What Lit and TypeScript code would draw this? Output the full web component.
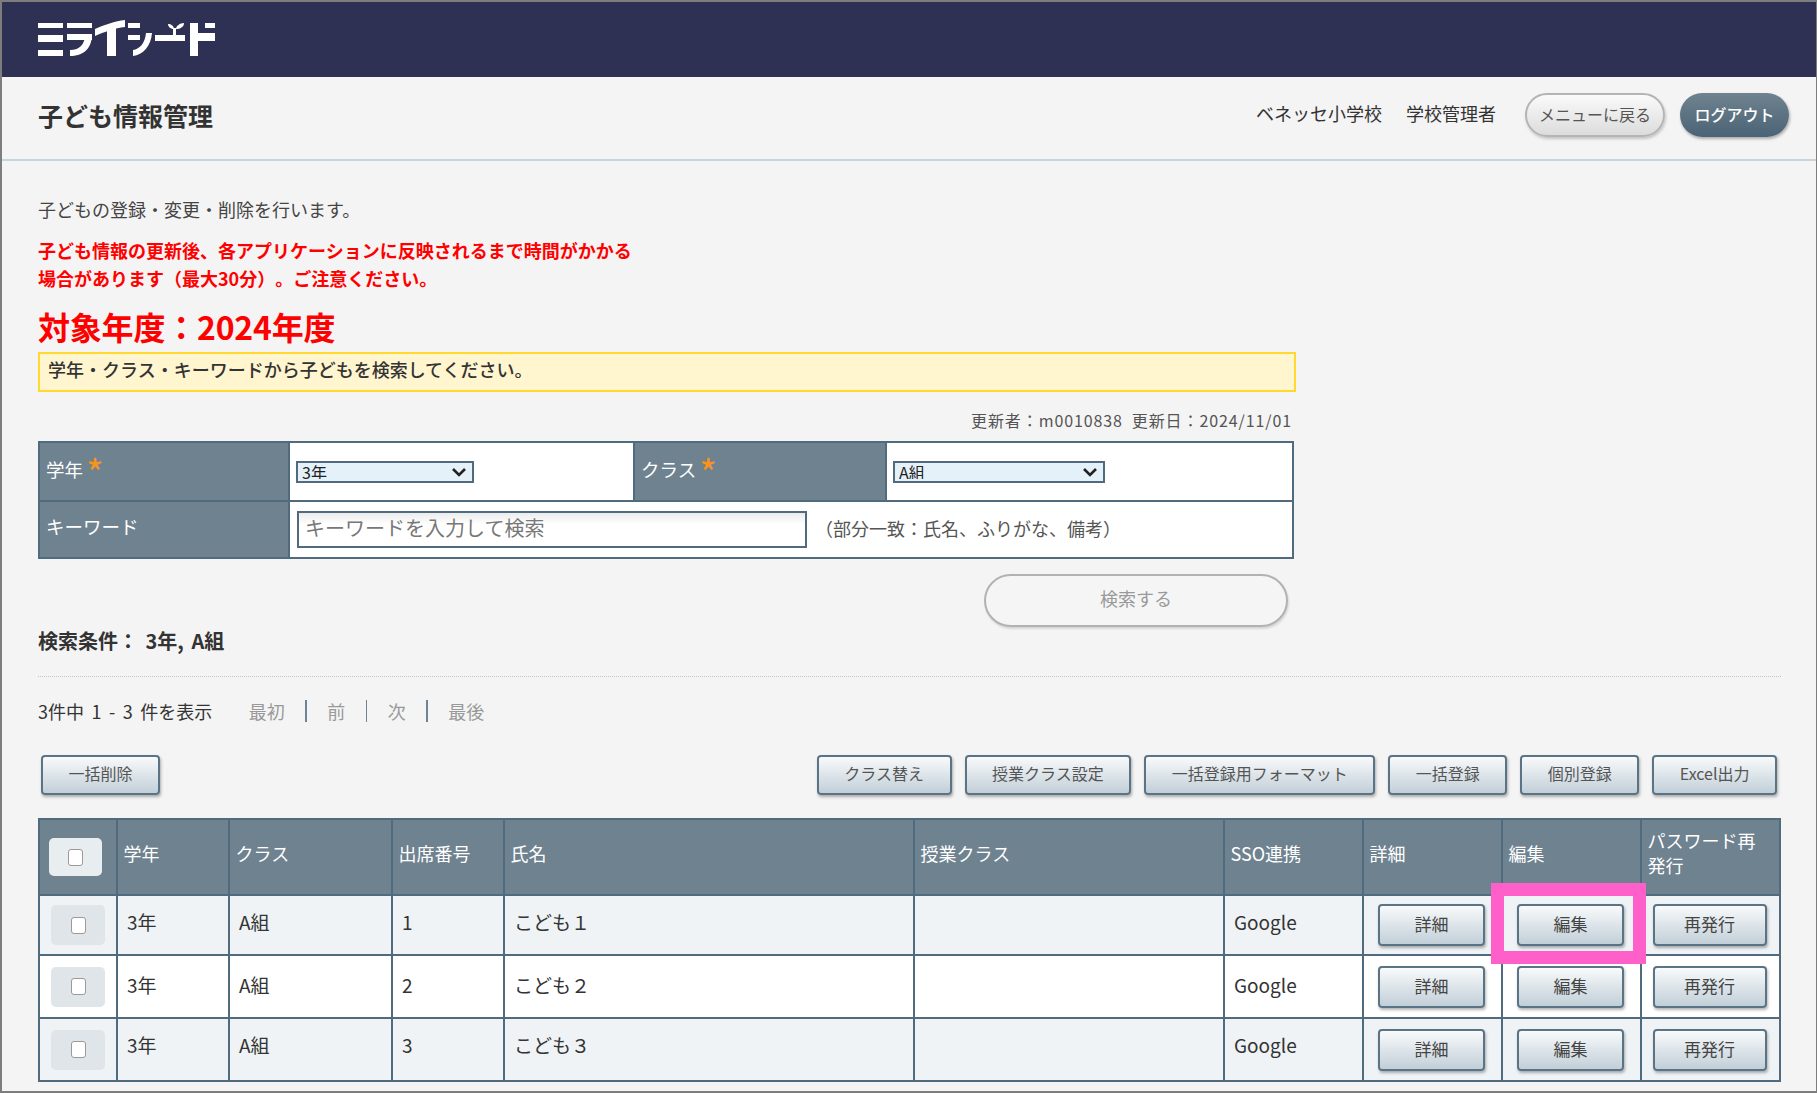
import { LitElement, html, css } from "lit";
import { customElement } from "lit/decorators.js";

const FONT = css`"Noto Sans CJK JP", "Noto Sans", sans-serif`;

@customElement("app-root")
export class AppRoot extends LitElement {
  static styles = css`
    :host {
      display: block;
      width: 1817px;
      height: 1093px;
      overflow: hidden;
      font-family: ${FONT};
      text-spacing-trim: space-all;
      color: #333;
      background: #f4f4f4;
    }
    * { box-sizing: border-box; }
    .frame {
      height: 1093px;
      border: 2px solid #7d7d7d;
      border-right-width: 1px;
      background: #f4f4f4;
    }
    .topbar {
      height: 75px;
      background: #2e3054;
      display: flex;
      align-items: center;
      padding-left: 36px;
    }
    .logo { display: block; margin-top: 1px; }
    .subbar {
      height: 84px;
      border-bottom: 2px solid #c6d4dd;
      display: flex;
      align-items: center;
      padding: 0 27px 6px 36px;
    }
    .subbar h1 {
      margin: 0;
      font-size: 25px;
      line-height: 32px;
      font-weight: 700;
      color: #333;
      flex: 1;
    }
    .who { font-size: 18px; line-height: 24px; margin: 0 24px 4px 0; }
    .who.last { margin-right: 29px; }
    .pill {
      height: 44px;
      border-radius: 22px;
      font-family: inherit;
      font-size: 16px;
      padding: 0 0 2px;
      cursor: pointer;
    }
    .pill.menu {
      width: 140px;
      margin-right: 15px;
      color: #555;
      border: 2px solid #b4b4b4;
      background: linear-gradient(#fafafa, #dcdcdc);
      box-shadow: 1px 2px 3px rgba(0, 0, 0, 0.2);
    }
    .pill.logout {
      width: 109px;
      color: #fff;
      font-weight: 500;
      border: 0;
      background: linear-gradient(#70838f, #4a6376);
      box-shadow: 1px 2px 3px rgba(0, 0, 0, 0.3);
    }
    main { padding: 34px 35px 0 36px; }
    .intro { margin: 0; font-size: 18px; line-height: 28px; color: #444; }
    .warn {
      margin: 13px 0 0;
      font-size: 18px;
      line-height: 28px;
      font-weight: 700;
      color: #f00;
    }
    .year {
      margin: 11.5px 0 0;
      font-size: 32px;
      letter-spacing: -0.2px;
      line-height: 44px;
      font-weight: 700;
      color: #f00;
    }
    .notice {
      width: 1258px;
      height: 40px;
      margin-top: 4.5px;
      border: 2px solid #ffd92e;
      background: #fff5cf;
      padding-left: 8px;
      font-size: 18px;
      line-height: 31px;
      font-weight: 500;
      color: #333;
    }
    .updated {
      width: 1254px;
      margin-top: 18px;
      text-align: right;
      font-size: 16px;
      letter-spacing: 0.9px;
      line-height: 20px;
      color: #555;
      white-space: pre;
    }
    table { border-collapse: collapse; table-layout: fixed; }
    .search { margin-top: 11px; width: 1254px; }
    .search td, .search th { border: 2px solid #4f6b7d; padding: 0; }
    .search th {
      background: #6f8290;
      color: #fff;
      font-size: 18.5px;
      font-weight: 400;
      text-align: left;
      padding: 0 0 6px 6px;
    }
    .search .r2 th { padding-bottom: 8px; }
    .search td { background: #fff; }
    .r1 { height: 59px; }
    .r2 { height: 57px; }
    .c1 { width: 250px; }
    .c2 { width: 345px; }
    .c3 { width: 252px; }
    .c4 { width: 407px; }
    .req {
      color: #f7931e;
      font-size: 38px;
      line-height: 10px;
      margin-left: 3px;
      vertical-align: -11px;
    }
    .sel { position: relative; margin-left: 6px; width: 178px; height: 22px; }
    .sel.wide { width: 212px; }
    select {
      appearance: none;
      display: block;
      width: 100%;
      height: 100%;
      padding: 0 0 2px 4px;
      border: 2px solid #4f6b7d;
      border-radius: 0;
      background-color: #e5f1f9;
      font-family: inherit;
      font-size: 16px;
      line-height: 18px;
      color: #222;
    }
    .chev { position: absolute; right: 7px; top: 6px; pointer-events: none; }
    .kw { display: flex; align-items: center; padding: 0 0 1px 7px; }
    .kw input {
      width: 510px;
      height: 37px;
      border: 2px solid #4f6b7d;
      padding: 0 6px 4px;
      background: linear-gradient(#ececec, #fff 35%);
      font-family: inherit;
      font-size: 20px;
      color: #333;
      outline: none;
    }
    .kw input::placeholder { color: #777; opacity: 1; }
    .hint { margin: 0 0 3px 8px; font-size: 18px; color: #555; }
    .go {
      width: 1250px;
      margin-top: 15px;
      display: flex;
      justify-content: flex-end;
    }
    .go button {
      width: 304px;
      height: 53px;
      border-radius: 27px;
      border: 2px solid #b2b2b2;
      background: #f5f5f5;
      box-shadow: 1px 2px 2px rgba(0, 0, 0, 0.12);
      color: #999;
      font-family: inherit;
      font-size: 18px;
      padding: 0 0 6px;
    }
    .cond { margin-top: 2px; font-size: 20px; line-height: 24px; font-weight: 700; color: #333; word-spacing: 3px; }
    .rule { margin-top: 23px; border-top: 1.5px dotted #c3c3c3; }
    .pager {
      margin-top: 22px;
      display: flex;
      align-items: center;
      gap: 20.5px;
      font-size: 18px;
      line-height: 24px;
      color: #999;
    }
    .pager .count { color: #333; margin-right: 16px; word-spacing: 3.5px; }
    .pager .sep { width: 1.5px; height: 22px; background: #6c8496; }
    .actions { margin-top: 32px; padding: 0 4px 0 3px; display: flex; gap: 13px; }
    .actions .grow { flex: 1; }
    .btn {
      height: 40px;
      padding: 0 25.5px 4px;
      border: 2px solid #5a7385;
      border-radius: 4px;
      background: linear-gradient(#f8fafb, #c2cfd8);
      box-shadow: 1px 2px 3px rgba(0, 0, 0, 0.3);
      color: #555;
      font-family: inherit;
      font-size: 16px;
      white-space: nowrap;
    }
    .list { margin-top: 23px; width: 1741px; }
    .list th, .list td { border: 2px solid #4f6b7d; }
    .list th {
      background: #6f8290;
      color: #fff;
      font-size: 18px;
      line-height: 25px;
      font-weight: 400;
      text-align: left;
      padding: 0 12px 8px 5.5px;
      height: 76px;
    }
    .list td {
      font-size: 19px;
      line-height: 26px;
      color: #333;
      padding: 0 4px 6px 9px;
    }
    .list tr.odd td { background: #eff3f6; height: 60px; }
    .list tr.even td { background: #fff; height: 63px; padding-bottom: 3px; }
    .list tr.last td { height: 63px; padding-bottom: 9px; }
    .w1 { width: 78px; }
    .w2 { width: 112px; }
    .w3 { width: 163px; }
    .w4 { width: 112px; }
    .w5 { width: 410px; }
    .w6 { width: 310px; }
    .w7 { width: 139px; }
    .list tr td.cell-check, .list tr th.cell-check { padding: 0; }
    .list tr td.cell-btn { padding: 0 2px 0 0; }
    .chk {
      display: flex;
      align-items: center;
      justify-content: center;
      border-radius: 5px;
    }
    .chk.head { width: 53px; height: 38px; background: #e8edf0; margin-left: 9px; }
    .chk.body { width: 54px; height: 40px; background: #dfe5e8; margin-left: 11px; }
    .chk input {
      appearance: none;
      display: block;
      width: 15px;
      height: 17px;
      margin: 0;
      background: #fff;
      border: 1.5px solid #9a9a9a;
      border-radius: 3px;
    }
    .holder { position: relative; width: 107px; margin: 0 auto; }
    .holder.wide { width: 114px; }
    .rbtn {
      display: block;
      width: 100%;
      height: 42px;
      padding: 0 0 3px;
      border: 2px solid #5a7385;
      border-radius: 4px;
      background: linear-gradient(#f8fafb, #c2cfd8);
      box-shadow: 1px 2px 3px rgba(0, 0, 0, 0.3);
      color: #444;
      font-family: inherit;
      font-size: 17px;
    }
    .mark {
      position: absolute;
      top: -21px;
      right: -22px;
      bottom: -18px;
      left: -26px;
      border: 13px solid #ff5fc8;
      pointer-events: none;
    }
  `;

  private logo() {
    return html`<svg class="logo" width="180" height="40" viewBox="38 20 180 40" role="img" aria-label="ミライシード" fill="#fff" stroke="none">
      <rect x="38" y="23" width="25" height="5"/>
      <rect x="38" y="35" width="25" height="7"/>
      <rect x="38" y="50" width="25" height="6"/>
      <rect x="67" y="23" width="25" height="5"/>
      <rect x="67" y="34" width="25" height="6"/>
      <path d="M85 34 H92 C92 46 86 56 70 56 V50 C80 50 85 44 85 34 Z"/>
      <path d="M125 20 V27 C115 28 104 32 95 36 V29 C104 25 115 21 125 20 Z"/>
      <rect x="107" y="28" width="9" height="28"/>
      <rect x="128" y="23" width="12" height="5"/>
      <rect x="128" y="35" width="12" height="5"/>
      <path d="M152 33 H152 C151 46 143 55 133 56 V50 C140 49 145 43 146 33 Z"/>
      <rect x="155" y="35" width="30" height="6"/>
      <rect x="173" y="28" width="3" height="8"/>
      <path d="M168 24 C171 24 174 26 174 29 C171 29 168 27 168 24 Z M184 23 C184 27 180 29 176 29 C176 26 180 23 184 23 Z"/>
      <rect x="190" y="23" width="8" height="33"/>
      <rect x="198" y="33" width="17" height="8"/>
      <rect x="205" y="23" width="10" height="5"/>
    </svg>`;
  }

  private chevron() {
    return html`<svg class="chev" width="16" height="10" viewBox="0 0 16 10"><path d="M2 2 L8 8 L14 2" fill="none" stroke="#222" stroke-width="2.6"/></svg>`;
  }

  private check(kind: string) {
    return html`<div class="chk ${kind}"><input type="checkbox" /></div>`;
  }

  private row(cls: string, n: number, label: string, marked: boolean) {
    return html`<tr class=${cls}>
      <td class="cell-check">${this.check("body")}</td>
      <td>3年</td>
      <td>A組</td>
      <td>${n}</td>
      <td>こども${label}</td>
      <td></td>
      <td>Google</td>
      <td class="cell-btn"><div class="holder"><button class="rbtn">詳細</button></div></td>
      <td class="cell-btn"><div class="holder"><button class="rbtn">編集</button>${marked ? html`<div class="mark"></div>` : ""}</div></td>
      <td class="cell-btn"><div class="holder wide"><button class="rbtn">再発行</button></div></td>
    </tr>`;
  }

  render() {
    return html`<div class="frame">
      <div class="topbar">${this.logo()}</div>
      <div class="subbar">
        <h1>子ども情報管理</h1>
        <span class="who">ベネッセ小学校</span>
        <span class="who last">学校管理者</span>
        <button class="pill menu">メニューに戻る</button>
        <button class="pill logout">ログアウト</button>
      </div>
      <main>
        <p class="intro">子どもの登録・変更・削除を行います。</p>
        <p class="warn">子ども情報の更新後、各アプリケーションに反映されるまで時間がかかる<br />場合があります（最大30分）。ご注意ください。</p>
        <p class="year">対象年度：2024年度</p>
        <div class="notice">学年・クラス・キーワードから子どもを検索してください。</div>
        <div class="updated">更新者：m0010838  更新日：2024/11/01</div>
        <table class="search">
          <colgroup><col class="c1" /><col class="c2" /><col class="c3" /><col class="c4" /></colgroup>
          <tr class="r1">
            <th>学年<span class="req">*</span></th>
            <td><div class="sel"><select><option>3年</option></select>${this.chevron()}</div></td>
            <th>クラス<span class="req">*</span></th>
            <td><div class="sel wide"><select><option>A組</option></select>${this.chevron()}</div></td>
          </tr>
          <tr class="r2">
            <th>キーワード</th>
            <td colspan="3">
              <div class="kw">
                <input type="text" placeholder="キーワードを入力して検索" />
                <span class="hint">（部分一致：氏名、ふりがな、備考）</span>
              </div>
            </td>
          </tr>
        </table>
        <div class="go"><button>検索する</button></div>
        <div class="cond">検索条件： 3年, A組</div>
        <div class="rule"></div>
        <div class="pager">
          <span class="count">3件中 1 - 3 件を表示</span>
          <span>最初</span><span class="sep"></span>
          <span>前</span><span class="sep"></span>
          <span>次</span><span class="sep"></span>
          <span>最後</span>
        </div>
        <div class="actions">
          <button class="btn">一括削除</button>
          <div class="grow"></div>
          <button class="btn">クラス替え</button>
          <button class="btn">授業クラス設定</button>
          <button class="btn">一括登録用フォーマット</button>
          <button class="btn">一括登録</button>
          <button class="btn">個別登録</button>
          <button class="btn">Excel出力</button>
        </div>
        <table class="list">
          <colgroup>
            <col class="w1" /><col class="w2" /><col class="w3" /><col class="w4" /><col class="w5" /><col class="w6" />
            <col class="w7" /><col class="w7" /><col class="w7" /><col class="w7" />
          </colgroup>
          <tr>
            <th class="cell-check">${this.check("head")}</th>
            <th>学年</th><th>クラス</th><th>出席番号</th><th>氏名</th><th>授業クラス</th>
            <th>SSO連携</th><th>詳細</th><th>編集</th><th>パスワード再発行</th>
          </tr>
          ${this.row("odd", 1, "１", true)}
          ${this.row("even", 2, "２", false)}
          ${this.row("odd last", 3, "３", false)}
        </table>
      </main>
    </div>`;
  }
}
